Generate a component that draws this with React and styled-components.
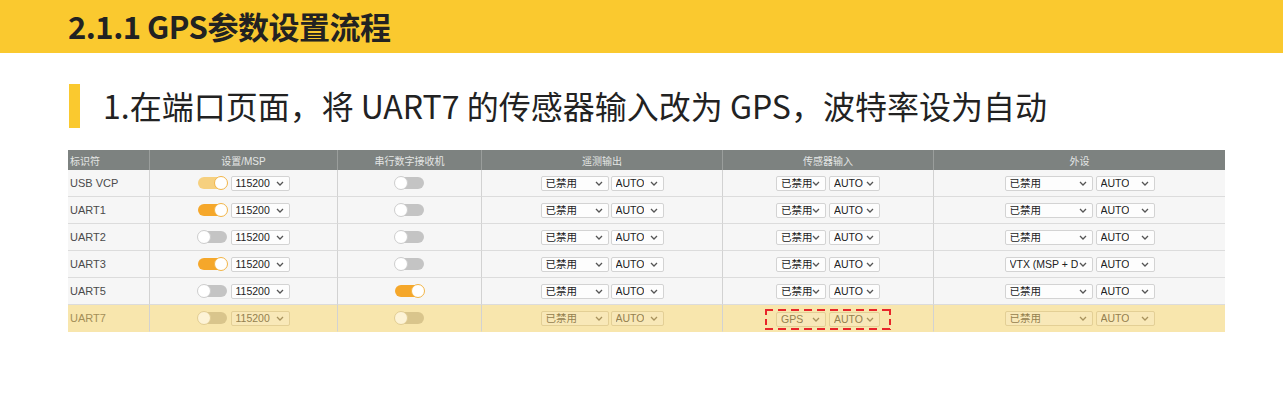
import React from 'react'
import styled, { createGlobalStyle } from 'styled-components'

const GlobalStyle = createGlobalStyle`
  html, body {
    margin: 0;
    padding: 0;
    background: #ffffff;
  }
  body {
    font-family: 'Noto Sans CJK SC', 'Noto Sans', sans-serif;
  }
`

const Page = styled.div`
  width: 1283px;
  height: 409px;
  background: #fff;
  overflow: hidden;
`

const Banner = styled.header`
  height: 53px;
  background: #fac92f;
  display: flex;
  align-items: center;
  padding-left: 68px;
`

const Title = styled.h1`
  margin: 0;
  font-family: 'Noto Sans CJK SC', 'Noto Sans', sans-serif;
  font-size: 31px;
  font-weight: 700;
  color: #222;
  letter-spacing: -0.5px;
  line-height: 1;
  padding-bottom: 2px;
`

const Step = styled.div`
  display: flex;
  align-items: center;
  margin: 31px 0 0 69px;
  height: 44px;
`

const StepBar = styled.span`
  width: 11px;
  align-self: stretch;
  background: #fac92f;
  margin-right: 23px;
`

const StepText = styled.h2`
  margin: 0;
  font-family: 'Noto Sans CJK SC', 'Noto Sans', sans-serif;
  font-size: 32px;
  font-weight: 400;
  color: #222;
  line-height: 1;
  padding-bottom: 3px;
`

const Table = styled.div`
  margin: 22px 0 0 68px;
  width: 1157px;
  display: grid;
  grid-template-columns: 81px 188px 144px 241px 211px 292px;
  font-family: 'Liberation Sans', 'Noto Sans CJK SC', sans-serif;
`

const Head = styled.div`
  height: 20px;
  background: #7d8280;
  color: #e4e6e5;
  font-size: 10px;
  display: flex;
  align-items: center;
  justify-content: ${p => (p.left ? 'flex-start' : 'center')};
  padding-left: ${p => (p.left ? '2px' : '0')};
  border-left: ${p => (p.first ? 'none' : '1px solid #9a9e9c')};
`

const Cell = styled.div`
  height: 26px;
  background: ${p => (p.hl ? '#f8e6ad' : '#f6f6f6')};
  border-bottom: 1px solid ${p => (p.hl ? '#f8e6ad' : '#dcdcdc')};
  border-left: ${p => (p.first ? 'none' : '1px solid #d2d2d2')};
  display: flex;
  align-items: center;
  justify-content: ${p => (p.left ? 'flex-start' : 'center')};
  padding-left: ${p => (p.left ? '2px' : '0')};
  gap: ${p => p.gap || 0}px;
  font-size: 11px;
  color: ${p => (p.hl ? '#a48f58' : '#4a4a4a')};
`

const Toggle = styled.span`
  position: relative;
  width: 29px;
  height: 12px;
  border-radius: 7px;
  background: ${p =>
    p.on ? (p.soft ? '#f6d07f' : '#f5a72a') : p.dim ? '#d9c58c' : '#c4c4c4'};
  flex-shrink: 0;

  &::after {
    content: '';
    position: absolute;
    top: -1px;
    ${p => (p.on ? 'right: -1px;' : 'left: -1px;')}
    width: 12px;
    height: 12px;
    border-radius: 50%;
    background: ${p => (p.dim ? '#fdf3d6' : '#fff')};
    border: 1px solid ${p => (p.on ? '#f2b548' : p.dim ? '#e2cd93' : '#cdcdcd')};
  }
`

const Select = styled.span`
  box-sizing: border-box;
  width: ${p => p.w}px;
  height: 15px;
  display: inline-flex;
  align-items: center;
  justify-content: space-between;
  padding: 0 5px 0 4px;
  background: ${p => (p.dim ? '#f8e8b8' : '#fdfdfd')};
  border: 1px solid ${p => (p.dim ? '#e3cf95' : '#d3d3d3')};
  border-radius: 2px;
  font-size: 10.5px;
  line-height: 13px;
  color: ${p => (p.dim ? '#94804e' : '#222')};
  white-space: nowrap;
  overflow: hidden;
  flex-shrink: 0;

  & > span {
    display: block;
    line-height: 13px;
    overflow: hidden;
  }
  & path {
    stroke: ${p => (p.dim ? '#a8925d' : '#555')};
  }
`

const Highlight = styled.span`
  display: inline-flex;
  gap: 3px;
  padding: 3px 11px;
  margin-top: 2px;
  background:
    repeating-linear-gradient(90deg, #e8262a 0 8px, transparent 8px 13px) top left / 100% 2px no-repeat,
    repeating-linear-gradient(90deg, #e8262a 0 8px, transparent 8px 13px) bottom left / 100% 2px no-repeat,
    repeating-linear-gradient(180deg, #e8262a 0 6px, transparent 6px 10px) top left / 2px 100% no-repeat,
    repeating-linear-gradient(180deg, #e8262a 0 6px, transparent 6px 10px) top right / 2px 100% no-repeat;
`

const Chevron = () => (
  <svg width="8" height="5" viewBox="0 0 8 5" style={{ flexShrink: 0 }}>
    <path d="M1 1l3 3 3-3" fill="none" strokeWidth="1.3" />
  </svg>
)

const Sel = ({ w, children, dim }) => (
  <Select w={w} dim={dim}>
    <span>{children}</span>
    <Chevron />
  </Select>
)

const rows = [
  { id: 'USB VCP', msp: 'soft', rx: false, per: '已禁用' },
  { id: 'UART1', msp: 'on', rx: false, per: '已禁用' },
  { id: 'UART2', msp: 'off', rx: false, per: '已禁用' },
  { id: 'UART3', msp: 'on', rx: false, per: 'VTX (MSP + D' },
  { id: 'UART5', msp: 'off', rx: true, per: '已禁用' },
  { id: 'UART7', msp: 'off', rx: false, per: '已禁用', hl: true, sensor: 'GPS' },
]

const heads = ['标识符', '设置/MSP', '串行数字接收机', '遥测输出', '传感器输入', '外设']

export default function App() {
  return (
    <Page>
      <GlobalStyle />
      <Banner>
        <Title>2.1.1 GPS参数设置流程</Title>
      </Banner>
      <Step>
        <StepBar />
        <StepText>1.在端口页面，将 UART7 的传感器输入改为 GPS，波特率设为自动</StepText>
      </Step>
      <Table>
        {heads.map((h, i) => (
          <Head key={h} left={i === 0} first={i === 0}>
            {h}
          </Head>
        ))}
        {rows.map(r => (
          <React.Fragment key={r.id}>
            <Cell first left hl={r.hl}>
              {r.id}
            </Cell>
            <Cell hl={r.hl} gap={4}>
              <Toggle on={r.msp !== 'off'} soft={r.msp === 'soft'} dim={r.hl} />
              <Sel w={59} dim={r.hl}>115200</Sel>
            </Cell>
            <Cell hl={r.hl}>
              <Toggle on={r.rx} dim={r.hl} />
            </Cell>
            <Cell hl={r.hl} gap={2}>
              <Sel w={68} dim={r.hl}>已禁用</Sel>
              <Sel w={53} dim={r.hl}>AUTO</Sel>
            </Cell>
            <Cell hl={r.hl} gap={3}>
              {r.sensor ? (
                <Highlight>
                  <Sel w={50} dim>{r.sensor}</Sel>
                  <Sel w={51} dim>AUTO</Sel>
                </Highlight>
              ) : (
                <>
                  <Sel w={50}>已禁用</Sel>
                  <Sel w={51}>AUTO</Sel>
                </>
              )}
            </Cell>
            <Cell hl={r.hl} gap={3}>
              <Sel w={88} dim={r.hl}>{r.per}</Sel>
              <Sel w={59} dim={r.hl}>AUTO</Sel>
            </Cell>
          </React.Fragment>
        ))}
      </Table>
    </Page>
  )
}
